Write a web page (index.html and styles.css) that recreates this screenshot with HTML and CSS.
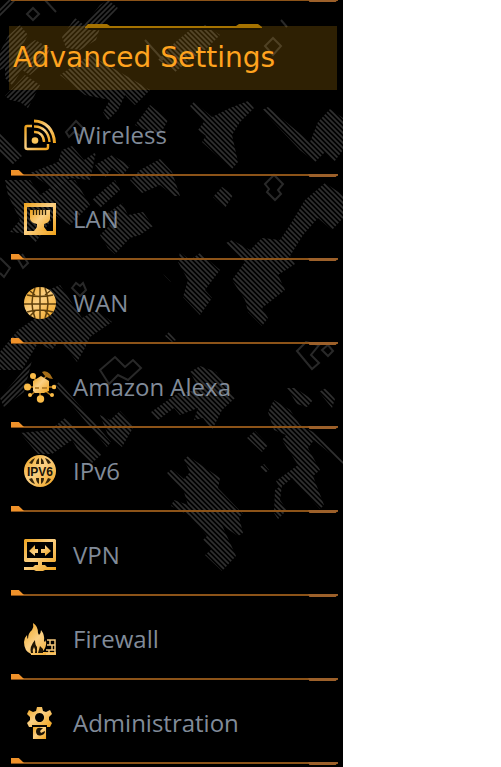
FILE: index.html
```html
<!DOCTYPE html>
<html lang="en">
<head>
  <meta charset="UTF-8">
  <meta name="viewport" content="width=device-width, initial-scale=1.0">
  <title>Advanced Settings</title>
  <link rel="stylesheet" href="styles.css">
</head>
<body>
  <nav class="sidebar" aria-labelledby="menu-title">
    <!-- Camo background -->
    <svg class="camo" width="343" height="767" viewBox="0 0 343 767" aria-hidden="true">
      <defs>
        <pattern id="hatch" width="5" height="5" patternUnits="userSpaceOnUse">
          <path d="M-1-1L6 6M-1 4L1 6M4-1L6 1" stroke="#303030" stroke-width="1.700"/>
        </pattern>
        <pattern id="hatchUp" width="5" height="5" patternUnits="userSpaceOnUse">
          <path d="M-1 6L6-1M-1 1L1-1M4 6L6 4" stroke="#2e2e2e" stroke-width="1.700"/>
        </pattern>
        <linearGradient id="gold" x1="0" y1="0" x2="1" y2="1">
          <stop offset="0" stop-color="#eda21c"/>
          <stop offset=".45" stop-color="#fbd084"/>
          <stop offset="1" stop-color="#f0a21a"/>
        </linearGradient>
      </defs>
      <g fill="url(#hatchUp)">
        <path d="M0 8L8 0H16L0 18zM0 52L8 36L20 25L28 35L20 50L10 65L0 70zM62 37L75 18L84 25L100 5L108 0L118 8L100 28L96 40L80 50L66 48zM5 62L35 40L50 48L45 62L30 75L22 70L12 85L5 78zM5 96L25 75L40 85L28 108L20 102L10 100z"/>
        <path d="M0 398L22 372L32 360L24 392L4 407z"/>
      </g>
      <g fill="url(#hatch)">
        <path d="M60 75L90 55L130 78L150 90L135 105L125 95L118 110L108 120L103 112L110 100L85 95zM158 60L172 45L190 30L205 25L220 35L205 50L190 60L175 72L168 66z"/>
        <path d="M190 106L194 102L212 117L230 108L248 101L254 108L240 122L232 135L238 162L232 169L202 142L206 136L198 130L204 122zM262 110L268 107L310 142L318 122L330 109L343 118V150L334 162L325 152L315 162L300 150z"/>
        <path d="M135 125L150 105L168 120L160 135L145 130zM0 133L22 156L12 165L0 152zM30 173L58 162L62 150L72 146L84 160L96 152L90 180L70 178L55 190zM95 165L112 155L130 166L122 176L112 168L105 178zM140 170L160 159L172 172L180 196L174 196L160 185L142 193L130 180z"/>
        <path d="M5 180H30L40 195L62 180H75L90 205L70 225L55 215L35 243L28 234L10 232L20 220L8 195zM92 200L115 180L120 190L100 208zM100 235L110 225L105 215L122 203L128 215L143 212L153 226L140 235L130 238L115 254L108 248zM213 197L222 187L233 195L225 208z"/>
        <path d="M343 195L325 183L305 200L290 225L280 240L262 238L250 250L232 240L226 243L245 262L232 280L245 300L248 312L262 326L268 318L262 308L285 290L278 275L295 264L290 256L303 235L318 218L332 230L343 218z"/>
        <path d="M180 252L190 260L200 253L220 270L205 290L212 298L200 315L183 297L188 280L178 262zM163 274L171 282L168 281zM165 336L169 332L176 340L172 342zM18 330L40 315L48 290L60 285L82 318L96 310L112 322L90 337L85 348L77 362L60 340L52 350L38 343L22 370H0V352z"/>
        <path d="M20 433L50 430L65 418L88 440L102 454L92 463L78 450L72 440L52 454H38zM55 385L59 382L111 442L107 447zM100 415L110 420L120 411L134 426L122 447L108 435z"/>
        <path d="M190 372L200 366L216 372L235 398L222 410L212 430L203 418L194 420L198 408L180 415L174 408L158 420L151 412L178 393L200 390zM167 473L172 469L184 479L190 472L184 460L188 456L220 478L218 488L243 514L239 517L243 533L238 536L222 525L236 556L222 571L205 555L212 549L203 540L207 536L190 516L171 506L174 500L188 505L184 492z"/>
        <path d="M287 388H295L313 400L307 407L297 404zM319 392L326 388L335 399L332 408zM268 412L274 400L290 410L300 425L313 432L343 460V464L314 440L308 448L320 470L313 476L324 505L320 509L292 478L280 488L276 481L298 465L282 440L286 435L274 430zM247 438L255 431L268 445L262 452zM260 467L264 464L269 470L265 473zM275 490L282 485L280 500L287 510L278 519L274 513z"/>
      </g>
      <g fill="none" stroke="#292929" stroke-width="2">
        <path d="M33 8l6 6-6 6-6-6zM45 0l11 12M273 38l8 8-8 9-8-9zM76 121l7 7-2 8-7-4-5 5-3-5zM281 20l6 7M265 184l9-9 9 9-5 6 3 4-6 6-8-8 2-3zM145 40l18 20M0 258l10 10-6 9-4-4M16 256l7 12 5-5-6-9M72 288l4-5 4 3 3-3 3 7-6 6-4-4zM100 370l15-13 10 10 8-7 8 8-13 12-10-5-9 9zM297 351l9-9 13 3-8 10 8 8-7 6zM328 345l5 6-5 5-6-6z"/>
      </g>
    </svg>

    <div class="divider"><span class="tab"></span><span class="foot"></span></div>

    <h2 class="menu-title" id="menu-title">
      <svg class="title-trim" width="178" height="6" viewBox="0 0 178 6" aria-hidden="true">
        <path d="M3 4h172v2H3z" fill="#211600"/>
        <path d="M0 3L3 0H22L25 2H151L154 0H173L177 3V4H0z" fill="#a57200"/>
      </svg>
      Advanced Settings
    </h2>

    <ul class="menu">
      <li>
        <a href="#wireless">
          <svg class="icon" viewBox="0 0 32 32" aria-hidden="true">
            <g fill="none" stroke="url(#gold)" stroke-width="2.400">
              <path d="M8 7H3Q1.500 7 1.500 9V28Q1.500 30 3.500 30H22Q24 30 24 28V25"/>
              <path d="M10 2C22 2 30 11 30.500 24" stroke-width="3"/>
              <path d="M10 7.500C19 7 25 14 25.500 23"/>
              <path d="M10 13C16 12.500 20 17 20 23"/>
            </g>
            <circle cx="11" cy="21.500" r="3.300" fill="#fcc65c"/>
          </svg>
          Wireless
        </a>
        <div class="divider"><span class="tab"></span><span class="foot"></span></div>
      </li>
      <li>
        <a href="#lan">
          <svg class="icon" viewBox="0 0 32 32" aria-hidden="true">
            <path d="M0 0H32V32H0zM3 4V28H29V4z" fill="url(#gold)" fill-rule="evenodd"/>
            <path d="M6 7H26V16Q25 20 20 21V24L23 28H10L13 24V21Q7 20 6 16z" fill="url(#gold)"/>
            <path d="M9.500 6V12M12.500 6V12M15.500 6V12M18.500 6V12M21.500 6V12" stroke="#2b1e08" stroke-width="1.300"/>
          </svg>
          LAN
        </a>
        <div class="divider"><span class="tab"></span><span class="foot"></span></div>
      </li>
      <li>
        <a href="#wan">
          <svg class="icon" viewBox="0 0 32 32" aria-hidden="true">
            <circle cx="16" cy="16" r="16" fill="url(#gold)"/>
            <g fill="none" stroke="#5e3f0c" stroke-width="1.500">
              <path d="M16 0V32M0 17H32M3 8Q16 11 29 8M3 25Q16 21 29 25"/>
              <path d="M11 1Q5 16 11 31M21 1Q27 16 21 31M6 4L11 8M26 4L21 8M6 29L11 24M26 29L21 24"/>
            </g>
          </svg>
          WAN
        </a>
        <div class="divider"><span class="tab"></span><span class="foot"></span></div>
      </li>
      <li>
        <a href="#alexa">
          <svg class="icon" viewBox="0 0 32 32" aria-hidden="true">
            <path d="M16 16L9 5M16 16H3M16 16L6 25M16 16V29M16 16L28 25M16 16H30M19 8L24 4" stroke="#b87b19" stroke-width="1.500"/>
            <g fill="#fbbc48">
              <circle cx="9" cy="5" r="3"/>
              <circle cx="3.500" cy="16" r="3.500"/>
              <circle cx="6" cy="24" r="2"/>
              <circle cx="16.500" cy="28" r="3.700"/>
              <circle cx="28" cy="24" r="2"/>
              <circle cx="30" cy="16" r="2.200"/>
            </g>
            <path d="M17 5L25 10V20L20 22H11L9 20V10z" fill="url(#gold)"/>
            <path d="M18 1Q22-1 26 3L29 8Q22 8 18 1z" fill="#a66e18"/>
            <path d="M11 17H15M18 17H23" stroke="#b9832e" stroke-width="2"/>
          </svg>
          Amazon Alexa
        </a>
        <div class="divider"><span class="tab"></span><span class="foot"></span></div>
      </li>
      <li>
        <a href="#ipv6">
          <svg class="icon" viewBox="0 0 32 32" aria-hidden="true">
            <circle cx="16" cy="16" r="16" fill="url(#gold)"/>
            <path d="M5 8Q8 4 11 3L8 9zM12 9Q12 5 15 3V9zM17 3Q20 5 20 9H17zM21 3Q25 4 27 8L24 9zM5 24L8 23L11 29Q7 28 5 24zM12 23H15V29Q12 27 12 23zM17 23H20Q20 27 17 29zM24 23L27 24Q25 28 21 29z" fill="#36260b"/>
            <text class="icon-text" x="16" y="21" text-anchor="middle">IPV6</text>
          </svg>
          IPv6
        </a>
        <div class="divider"><span class="tab"></span><span class="foot"></span></div>
      </li>
      <li>
        <a href="#vpn">
          <svg class="icon" viewBox="0 0 32 32" aria-hidden="true">
            <path d="M1 0H31L32 1V22L31 23H18V26H21L23 28H32V31H21L19 32H12L10 31H0V28H9L11 26H14V23H1L0 22V1zM3 3V19H29V3z" fill="url(#gold)" fill-rule="evenodd"/>
            <path d="M5 12L11 6V10H14V14H11V17zM27 12L21 6V10H17V14H21V17z" fill="url(#gold)"/>
          </svg>
          VPN
        </a>
        <div class="divider"><span class="tab"></span><span class="foot"></span></div>
      </li>
      <li>
        <a href="#firewall">
          <svg class="icon" viewBox="0 0 32 32" aria-hidden="true">
            <path d="M7 31Q0 28 0 19Q0 15 3 12Q3 15 4 16Q4 10 8 7Q10 4 9 0Q14 3 14 10L15 12Q17 10 17 7Q21 12 20 18L21 19L22 17Q23 25 18 29H32V32H7z" fill="url(#gold)"/>
            <path d="M7 30Q5 24 11 17Q11 22 13 24V30H11Q12 27 10 24Q8 27 9 30zM14 30L16 23L19 26V30z" fill="#1f1504"/>
            <path d="M23 17H31V31H22M23 22H31M22 27H31M26 17V22M28 22V27M25 27V31" fill="none" stroke="#f4c77b" stroke-width="1.500"/>
          </svg>
          Firewall
        </a>
        <div class="divider"><span class="tab"></span><span class="foot"></span></div>
      </li>
      <li>
        <a href="#administration">
          <svg class="icon" viewBox="0 0 32 32" aria-hidden="true">
            <path d="M13 0H18L19 4L22 5L26 3L28 7L25 10V13L28 16L26 20H5L3 16L6 13V10L3 7L5 3L9 5L12 4zM15.500 6A4.500 4.500 0 1 0 15.600 6z" fill="url(#gold)" fill-rule="evenodd"/>
            <path d="M8 18H23V32H8z" fill="#0b0702"/>
            <path d="M9 20H22V32H9z" fill="url(#gold)"/>
            <path d="M17 21Q12 20 12 25Q13 30 18 28Q21 27 21 24L17 26L16 24L19 21z" fill="#1b1204"/>
          </svg>
          Administration
        </a>
        <div class="divider"><span class="tab"></span><span class="foot"></span></div>
      </li>
    </ul>
  </nav>
</body>
</html>
```
FILE: styles.css
```css
body {
  margin: 0;
  background: #fff;
}

.sidebar {
  position: relative;
  box-sizing: border-box;
  width: 68.5%;
  min-height: 100vh;
  overflow: hidden;
  background: #000;
}

.camo {
  position: absolute;
  top: 0;
  left: 0;
}

/* orange line with a raised tab on the left and a thick foot on the right */
.divider {
  position: relative;
  display: flex;
  justify-content: space-between;
  height: 7px;
  margin: 0 5px 0 11px;
  background: linear-gradient(#8c5318, #8c5318) 0 4px / 100% 2px no-repeat;
}

.sidebar > .divider {
  margin-top: -5px;
}

.tab {
  width: 13px;
  height: 5px;
  background: #f0922a;
  clip-path: polygon(0 0, 60% 0, 100% 100%, 0 100%);
}

.foot {
  align-self: flex-end;
  width: 30px;
  height: 3px;
  background: #9c602a;
  clip-path: polygon(0 0, 100% 0, 92% 100%, 4% 100%);
}

.menu-title {
  position: relative;
  margin: 24px 6px 3px 9px;
  padding: 0 4px;
  background: rgba(255, 176, 16, 0.18);
  color: #ffa31f;
  font-family: Verdana, "DejaVu Sans", sans-serif;
  font-size: 28px;
  font-weight: normal;
  line-height: 64px;
}

.title-trim {
  position: absolute;
  top: -2px;
  left: 76px;
}

.menu {
  position: relative;
  margin: 0;
  padding: 0;
  list-style: none;
}

.menu a {
  display: flex;
  align-items: center;
  gap: 17px;
  box-sizing: border-box;
  height: 77px;
  padding: 6px 16px 0 24px;
  color: #818b99;
  font-family: "Segoe UI", "Open Sans", sans-serif;
  font-size: 24px;
  text-decoration: none;
}

.menu a:hover {
  color: #ffa31f;
}

.icon {
  flex: none;
  width: 32px;
  height: 32px;
}

.icon-text {
  fill: #1b1306;
  font-family: "Liberation Sans", Arial, sans-serif;
  font-size: 12px;
  font-weight: bold;
}
```
